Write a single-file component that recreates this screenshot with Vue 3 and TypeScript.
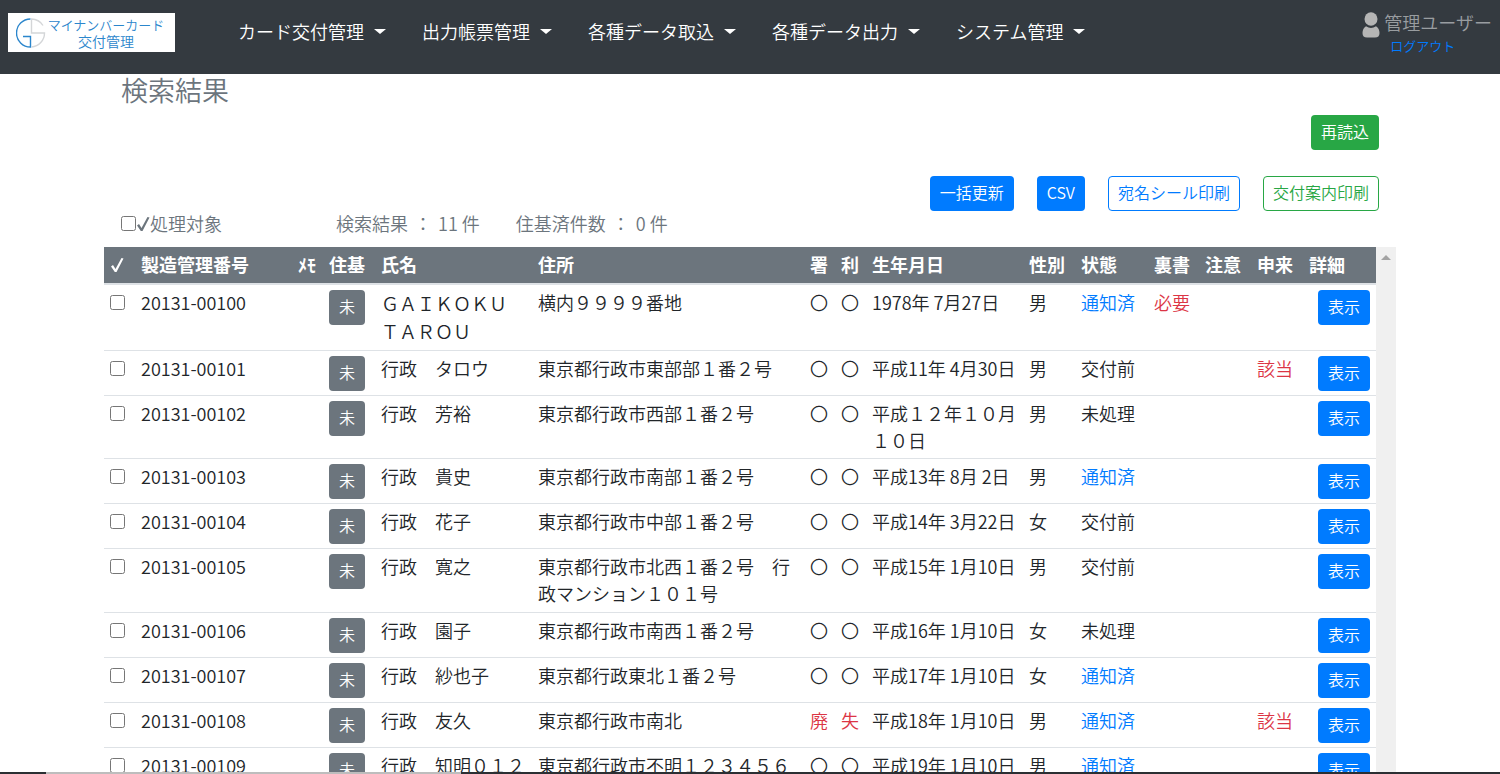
<script setup lang="ts">
import { ref } from 'vue'

interface Mark { text: string; alert?: boolean }
interface Row {
  id: string
  name: string
  address: string
  sign: Mark
  use: Mark
  birth: string
  sex: string
  status: string
  back?: string
  apply?: string
  wide?: boolean
}

const menus: string[] = ['カード交付管理', '出力帳票管理', '各種データ取込', '各種データ出力', 'システム管理']
const counts = [
  { label: '検索結果', value: '11 件' },
  { label: '住基済件数', value: '0 件' },
]
const ok: Mark = { text: '〇' }

const rows: Row[] = [
  { id: '20131-00100', name: 'ＧＡＩＫＯＫＵ　ＴＡＲＯＵ', address: '横内９９９９番地', sign: ok, use: ok, birth: '1978年 7月27日', sex: '男', status: '通知済', back: '必要', wide: true },
  { id: '20131-00101', name: '行政　タロウ', address: '東京都行政市東部部１番２号', sign: ok, use: ok, birth: '平成11年 4月30日', sex: '男', status: '交付前', apply: '該当' },
  { id: '20131-00102', name: '行政　芳裕', address: '東京都行政市西部１番２号', sign: ok, use: ok, birth: '平成１２年１０月１０日', sex: '男', status: '未処理' },
  { id: '20131-00103', name: '行政　貴史', address: '東京都行政市南部１番２号', sign: ok, use: ok, birth: '平成13年 8月 2日', sex: '男', status: '通知済' },
  { id: '20131-00104', name: '行政　花子', address: '東京都行政市中部１番２号', sign: ok, use: ok, birth: '平成14年 3月22日', sex: '女', status: '交付前' },
  { id: '20131-00105', name: '行政　寛之', address: '東京都行政市北西１番２号　行政マンション１０１号', sign: ok, use: ok, birth: '平成15年 1月10日', sex: '男', status: '交付前' },
  { id: '20131-00106', name: '行政　園子', address: '東京都行政市南西１番２号', sign: ok, use: ok, birth: '平成16年 1月10日', sex: '女', status: '未処理' },
  { id: '20131-00107', name: '行政　紗也子', address: '東京都行政東北１番２号', sign: ok, use: ok, birth: '平成17年 1月10日', sex: '女', status: '通知済' },
  { id: '20131-00108', name: '行政　友久', address: '東京都行政市南北', sign: { text: '廃', alert: true }, use: { text: '失', alert: true }, birth: '平成18年 1月10日', sex: '男', status: '通知済', apply: '該当' },
  { id: '20131-00109', name: '行政　知明０１２', address: '東京都行政市不明１２３４５６', sign: ok, use: ok, birth: '平成19年 1月10日', sex: '男', status: '通知済' },
]

const selected = ref<string[]>([])
const onlyTargets = ref(false)
</script>

<template>
  <div class="page">
    <header class="bar">
      <a class="logo" href="#" aria-label="マイナンバーカード交付管理">
        <svg class="logo-mark" viewBox="0 0 30 32" aria-hidden="true">
          <path d="M14.500 2A14 14 0 0 0 14.500 30V19.500H7" fill="none" stroke="#2b86cc" stroke-width="1.4" />
          <path d="M27 8.500A14 14 0 0 0 15.500 2V16H28.500A14 14 0 0 1 15.500 30" fill="none" stroke="#d4d6d8" stroke-width="1.4" />
        </svg>
        <span class="logo-text"><span>マイナンバーカード</span><span class="logo-sub">交付管理</span></span>
      </a>
      <nav class="menu">
        <button v-for="m in menus" :key="m" type="button" class="menu-item">{{ m }}<i class="caret"></i></button>
      </nav>
      <div class="user">
        <svg class="user-icon" viewBox="0 0 18 26" aria-hidden="true">
          <ellipse cx="9" cy="7" rx="6.500" ry="6.800" fill="#b5b5b5" />
          <path d="M4 14.200Q9 17.600 14 14.200Q17.500 16.500 17.500 21Q17.500 25.500 13 25.500H5Q.5 25.500.5 21Q.5 16.500 4 14.200Z" fill="#b5b5b5" />
        </svg>
        <div class="user-text">
          <span class="user-name">管理ユーザー</span>
          <a href="#" class="logout">ログアウト</a>
        </div>
      </div>
    </header>

    <main class="main">
      <h1 class="title">検索結果</h1>
      <div class="actions first"><button type="button" class="btn green">再読込</button></div>
      <div class="actions">
        <button type="button" class="btn blue">一括更新</button>
        <button type="button" class="btn blue">CSV</button>
        <button type="button" class="btn line-blue">宛名シール印刷</button>
        <button type="button" class="btn line-green">交付案内印刷</button>
      </div>
      <div class="summary">
        <label class="target">
          <input v-model="onlyTargets" type="checkbox" />
          <svg class="tick" viewBox="0 0 14 16" aria-hidden="true"><path d="M1 9.500L3 8L5.500 12L11.500 1L13.500 1.500L6.500 15H4.800Z" fill="currentColor" /></svg>
          <span>処理対象</span>
        </label>
        <div v-for="c in counts" :key="c.label" class="count">
          <span>{{ c.label }}</span><span>：</span><span>{{ c.value }}</span>
        </div>
      </div>

      <div class="list">
        <div class="scroll">
          <table>
            <colgroup>
              <col class="w31" /><col class="w157" /><col class="w31" /><col class="w52" /><col class="w157" />
              <col /><col class="w31" /><col class="w31" /><col class="w157" /><col class="w52" />
              <col class="w73" /><col class="w51" /><col class="w52" /><col class="w52" /><col class="w73" />
            </colgroup>
            <thead>
              <tr>
                <th scope="col"><svg class="tick" viewBox="0 0 14 16" role="img" aria-label="選択"><path d="M1 9.500L3 8L5.500 12L11.500 1L13.500 1.500L6.500 15H4.800Z" fill="currentColor" /></svg></th>
                <th scope="col">製造管理番号</th><th scope="col">ﾒﾓ</th><th scope="col">住基</th><th scope="col">氏名</th>
                <th scope="col">住所</th><th scope="col">署</th><th scope="col">利</th><th scope="col">生年月日</th><th scope="col">性別</th>
                <th scope="col">状態</th><th scope="col">裏書</th><th scope="col">注意</th><th scope="col">申来</th><th scope="col">詳細</th>
              </tr>
            </thead>
            <tbody>
              <tr v-for="r in rows" :key="r.id">
                <td><input v-model="selected" type="checkbox" :value="r.id" :aria-label="r.id" /></td>
                <td>{{ r.id }}</td>
                <td></td>
                <td><button type="button" class="btn gray">未</button></td>
                <td :class="{ wide: r.wide }">{{ r.name }}</td>
                <td>{{ r.address }}</td>
                <td :class="{ red: r.sign.alert }">{{ r.sign.text }}</td>
                <td :class="{ red: r.use.alert }">{{ r.use.text }}</td>
                <td>{{ r.birth }}</td>
                <td>{{ r.sex }}</td>
                <td><a v-if="r.status === '通知済'" href="#">{{ r.status }}</a><template v-else>{{ r.status }}</template></td>
                <td class="red">{{ r.back }}</td>
                <td></td>
                <td class="red">{{ r.apply }}</td>
                <td class="end"><button type="button" class="btn blue">表示</button></td>
              </tr>
            </tbody>
          </table>
        </div>
        <div class="track"><i class="up"></i></div>
      </div>
    </main>
    <div class="edge"><i class="edge-light"></i></div>
  </div>
</template>

<style>
body {
  margin: 0;
  background: #fff;
}
</style>

<style scoped>
.page {
  display: flex;
  flex-direction: column;
  height: 100vh;
  overflow: hidden;
  font-family: "Noto Sans CJK JP", "Noto Sans", sans-serif;
  font-size: 18px;
  font-weight: 350;
  line-height: 27px;
  color: #212529;
}
.page * {
  box-sizing: border-box;
}
button {
  font: inherit;
  cursor: pointer;
}
a {
  color: #007bff;
  text-decoration: none;
}
.bar {
  display: flex;
  align-items: flex-start;
  flex: none;
  height: 74px;
  padding: 12px 8px 0;
  background: #343a40;
}
.logo {
  display: flex;
  align-items: center;
  width: 167px;
  height: 39px;
  margin-top: 1px;
  padding-left: 8px;
  background: #fff;
  color: #2b86cc;
  font-size: 13px;
  line-height: 16px;
}
.logo-mark {
  width: 30px;
  height: 32px;
}
.logo-text {
  display: flex;
  flex-direction: column;
  align-items: center;
  width: 120px;
  white-space: nowrap;
}
.logo-sub {
  font-size: 14px;
}
.menu {
  display: flex;
  gap: 36px;
  margin: 6px 0 0 63px;
}
.menu-item {
  display: flex;
  align-items: center;
  gap: 10px;
  padding: 0;
  border: 0;
  background: none;
  color: #fff;
  white-space: nowrap;
}
.caret {
  border: 6px solid transparent;
  border-top: 5px solid #fff;
  border-bottom: 0;
}
.user {
  display: flex;
  gap: 4px;
  margin-left: auto;
}
.user-icon {
  width: 18px;
  height: 26px;
}
.user-text {
  display: flex;
  flex-direction: column;
  color: #999da0;
  line-height: 20px;
}
.logout {
  padding: 4px 0 0 6px;
  font-size: 13px;
}
.main {
  display: flex;
  flex-direction: column;
  flex: 1;
  min-height: 0;
  padding: 0 104px;
}
.title {
  margin: 0 0 4px 17px;
  font-size: 27px;
  font-weight: 350;
  line-height: 31px;
  color: #6c757d;
}
.actions {
  display: flex;
  justify-content: flex-end;
  gap: 23px;
  margin: 26px 17px 0 0;
}
.actions.first {
  margin-top: 6px;
}
.btn {
  height: 35px;
  padding: 0 9px 2px;
  border: 1px solid transparent;
  border-radius: 4px;
  font-size: 16px;
  line-height: 31px;
  white-space: nowrap;
}
.blue {
  background: #007bff;
  color: #fff;
}
.green {
  background: #28a745;
  color: #fff;
}
.gray {
  background: #6c757d;
  color: #fff;
}
.line-blue {
  border-color: #007bff;
  background: #fff;
  color: #007bff;
}
.line-green {
  border-color: #28a745;
  background: #fff;
  color: #28a745;
}
.summary {
  display: flex;
  gap: 36px;
  padding: 0 17px 11px;
  line-height: 25px;
  color: #6c757d;
}
.target {
  display: flex;
  align-items: center;
  width: 179px;
}
.count {
  display: flex;
  gap: 6px;
}
input {
  width: 15px;
  height: 15px;
  margin: 0;
}
.tick {
  width: 14px;
  height: 16px;
}
.list {
  display: flex;
  flex: 1;
  min-height: 0;
}
.scroll {
  flex: 1;
  min-width: 0;
  overflow: hidden;
}
table {
  width: 100%;
  table-layout: fixed;
  border-spacing: 0;
}
.w31 {
  width: 31px;
}
.w51 {
  width: 51px;
}
.w52 {
  width: 52px;
}
.w73 {
  width: 73px;
}
.w157 {
  width: 157px;
}
th {
  padding: 4px 6px 5px;
  border-bottom: 1px solid #dee2e6;
  background: #6c757d;
  color: #fff;
  font-weight: 700;
  text-align: left;
  white-space: nowrap;
}
th .tick {
  display: block;
}
td {
  padding: 4px 6px;
  border-top: 1px solid #dee2e6;
  vertical-align: top;
}
td:nth-child(6) {
  padding-bottom: 5px;
}
td input {
  display: block;
  margin-top: 6px;
}
td .btn {
  display: block;
  margin-top: 1px;
}
.wide {
  padding-bottom: 5px;
  line-height: 28px;
}
.end .btn {
  margin-left: auto;
}
.red {
  color: #dc3545;
}
.track {
  width: 20px;
  background: #f0f0f0;
}
.up {
  display: block;
  width: 10px;
  margin: 8px 0 0 5px;
  border: 5px solid transparent;
  border-top: 0;
  border-bottom-color: #a3a3a3;
}
.edge {
  display: flex;
  flex: none;
  height: 2px;
  padding-left: 46px;
  background: #2b2f33;
}
.edge-light {
  width: 415px;
  background: #bdbdbd;
}
</style>
